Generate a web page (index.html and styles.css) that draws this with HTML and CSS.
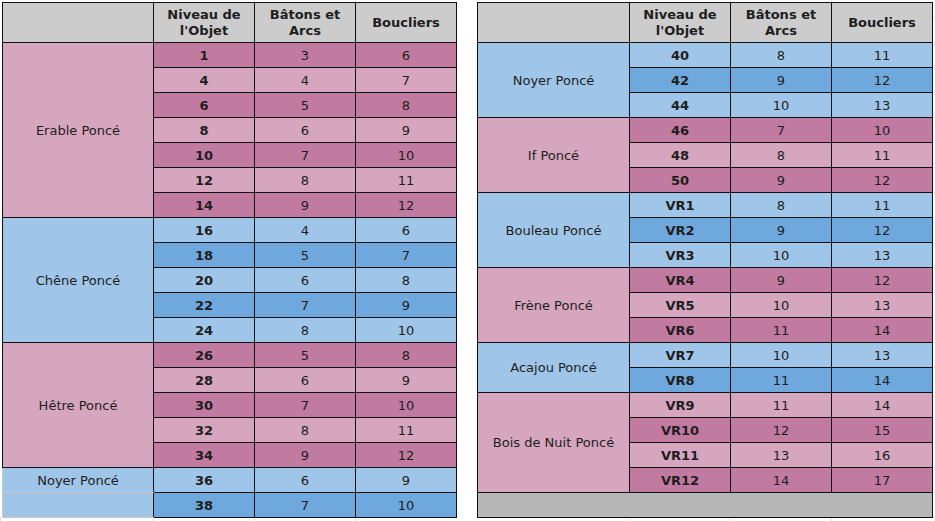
FILE: index.html
```html
<!DOCTYPE html>
<html lang="fr">
<head>
<meta charset="utf-8">
<title>Bois poncé</title>
<link rel="stylesheet" href="styles.css">
</head>
<body>
<div class="sheet">
  <table class="grid grid-left">
    <colgroup><col class="c-name"><col class="c-num"><col class="c-num"><col class="c-num"></colgroup>
    <thead>
      <tr><th></th><th>Niveau de l'Objet</th><th>Bâtons et Arcs</th><th>Boucliers</th></tr>
    </thead>
    <tbody>
      <tr class="pd"><td class="name pl" rowspan="7">Erable Poncé</td><td class="lvl">1</td><td>3</td><td>6</td></tr>
      <tr class="pl"><td class="lvl">4</td><td>4</td><td>7</td></tr>
      <tr class="pd"><td class="lvl">6</td><td>5</td><td>8</td></tr>
      <tr class="pl"><td class="lvl">8</td><td>6</td><td>9</td></tr>
      <tr class="pd"><td class="lvl">10</td><td>7</td><td>10</td></tr>
      <tr class="pl"><td class="lvl">12</td><td>8</td><td>11</td></tr>
      <tr class="pd"><td class="lvl">14</td><td>9</td><td>12</td></tr>
      <tr class="bl"><td class="name bl" rowspan="5">Chêne Poncé</td><td class="lvl">16</td><td>4</td><td>6</td></tr>
      <tr class="bd"><td class="lvl">18</td><td>5</td><td>7</td></tr>
      <tr class="bl"><td class="lvl">20</td><td>6</td><td>8</td></tr>
      <tr class="bd"><td class="lvl">22</td><td>7</td><td>9</td></tr>
      <tr class="bl"><td class="lvl">24</td><td>8</td><td>10</td></tr>
      <tr class="pd"><td class="name pl" rowspan="5">Hêtre Poncé</td><td class="lvl">26</td><td>5</td><td>8</td></tr>
      <tr class="pl"><td class="lvl">28</td><td>6</td><td>9</td></tr>
      <tr class="pd"><td class="lvl">30</td><td>7</td><td>10</td></tr>
      <tr class="pl"><td class="lvl">32</td><td>8</td><td>11</td></tr>
      <tr class="pd"><td class="lvl">34</td><td>9</td><td>12</td></tr>
      <tr class="bl"><td class="name bl soft">Noyer Poncé</td><td class="lvl">36</td><td>6</td><td>9</td></tr>
      <tr class="bd"><td class="name bl soft"></td><td class="lvl">38</td><td>7</td><td>10</td></tr>
    </tbody>
  </table>

  <table class="grid grid-right">
    <colgroup><col class="c-name-r"><col class="c-num"><col class="c-num"><col class="c-num"></colgroup>
    <thead>
      <tr><th></th><th>Niveau de l'Objet</th><th>Bâtons et Arcs</th><th>Boucliers</th></tr>
    </thead>
    <tbody>
      <tr class="bl"><td class="name bl" rowspan="3">Noyer Poncé</td><td class="lvl">40</td><td>8</td><td>11</td></tr>
      <tr class="bd"><td class="lvl">42</td><td>9</td><td>12</td></tr>
      <tr class="bl"><td class="lvl">44</td><td>10</td><td>13</td></tr>
      <tr class="pd"><td class="name pl" rowspan="3">If Poncé</td><td class="lvl">46</td><td>7</td><td>10</td></tr>
      <tr class="pl"><td class="lvl">48</td><td>8</td><td>11</td></tr>
      <tr class="pd"><td class="lvl">50</td><td>9</td><td>12</td></tr>
      <tr class="bl"><td class="name bl" rowspan="3">Bouleau Poncé</td><td class="lvl">VR1</td><td>8</td><td>11</td></tr>
      <tr class="bd"><td class="lvl">VR2</td><td>9</td><td>12</td></tr>
      <tr class="bl"><td class="lvl">VR3</td><td>10</td><td>13</td></tr>
      <tr class="pd"><td class="name pl" rowspan="3">Frène Poncé</td><td class="lvl">VR4</td><td>9</td><td>12</td></tr>
      <tr class="pl"><td class="lvl">VR5</td><td>10</td><td>13</td></tr>
      <tr class="pd"><td class="lvl">VR6</td><td>11</td><td>14</td></tr>
      <tr class="bl"><td class="name bl" rowspan="2">Acajou Poncé</td><td class="lvl">VR7</td><td>10</td><td>13</td></tr>
      <tr class="bd"><td class="lvl">VR8</td><td>11</td><td>14</td></tr>
      <tr class="pl"><td class="name pl" rowspan="4">Bois de Nuit Poncé</td><td class="lvl">VR9</td><td>11</td><td>14</td></tr>
      <tr class="pd"><td class="lvl">VR10</td><td>12</td><td>15</td></tr>
      <tr class="pl"><td class="lvl">VR11</td><td>13</td><td>16</td></tr>
      <tr class="pd"><td class="lvl">VR12</td><td>14</td><td>17</td></tr>
      <tr class="blank"><td colspan="4"></td></tr>
    </tbody>
  </table>
</div>
</body>
</html>
```

FILE: styles.css
```css
html, body {
  margin: 0;
  padding: 0;
}

body {
  background-color: #ffffff;
  background-image:
    linear-gradient(#e2e2e2, #e2e2e2),
    linear-gradient(#e2e2e2, #e2e2e2),
    linear-gradient(#e2e2e2, #e2e2e2),
    linear-gradient(#e2e2e2, #e2e2e2),
    linear-gradient(#e2e2e2, #e2e2e2),
    linear-gradient(#e2e2e2, #e2e2e2),
    linear-gradient(#e2e2e2, #e2e2e2),
    repeating-linear-gradient(to bottom, #e2e2e2 0 1px, transparent 1px 25px);
  background-repeat: no-repeat;
  background-size: 1px 100%, 1px 100%, 1px 100%, 1px 100%, 1px 100%, 1px 100%, 1px 100%, 3px 100%;
  background-position: 153px 0, 254px 0, 355px 0, 629px 0, 730px 0, 831px 0, 0 517px, 933px 17px;
  font-family: "DejaVu Sans", Verdana, sans-serif;
  font-size: 13px;
  color: #1e1e1e;
  min-height: 521px;
}

.sheet {
  display: flex;
  align-items: flex-start;
  gap: 20px;
  padding: 2px 0 0 2px;
}

.grid {
  border-collapse: collapse;
  table-layout: fixed;
}

.grid-left { width: 455px; }
.grid-right { width: 456px; }

.c-name { width: 151px; }
.c-name-r { width: 152px; }
.c-num { width: 101px; }

.grid th,
.grid td {
  border: 1px solid #111111;
  padding: 1px 4px 0;
  text-align: center;
  vertical-align: middle;
  overflow: hidden;
}

.grid th {
  background: #cccccc;
  height: 38px;
  font-weight: bold;
  line-height: 16px;
}

.grid td {
  height: 23px;
  line-height: 16px;
}

.grid td.lvl { font-weight: bold; }

.pl, .grid td.pl { background: #d5a6bd; }
.pd { background: #c27ba0; }
.bl, .grid td.bl { background: #9fc5e8; }
.bd { background: #6fa8dc; }

.grid td.soft {
  border-left-color: #c9c9c9;
  border-bottom-color: #c9c9c9;
  border-right-color: #111111;
}

.blank td { background: #b7b7b7; }
```
